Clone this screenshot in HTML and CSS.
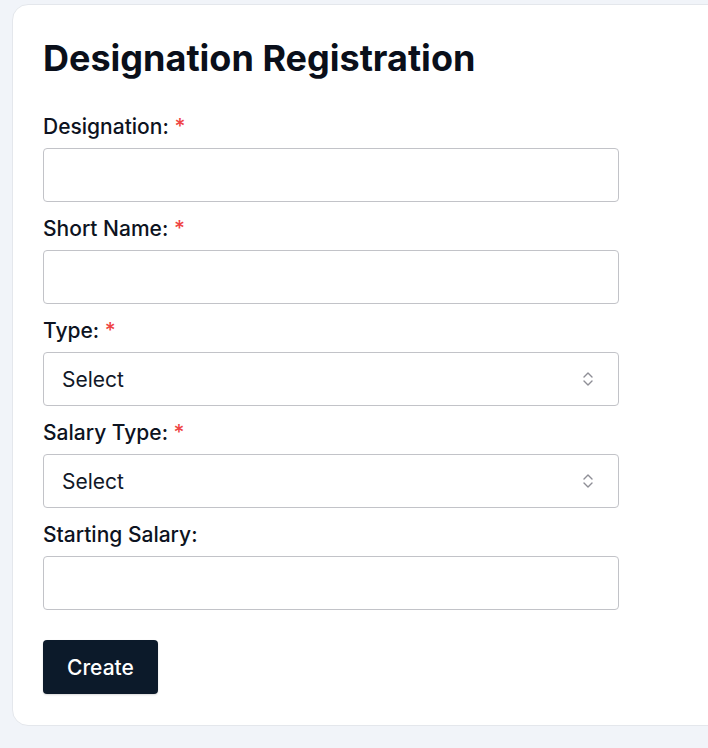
FILE: index.html
```html
<!DOCTYPE html>
<html lang="en">
<head>
<meta charset="utf-8">
<title>Designation Registration</title>
<link rel="stylesheet" href="styles.css">
</head>
<body>
<div class="card">
  <h1 class="title">Designation Registration</h1>
  <form class="form">
    <div class="field">
      <label class="label">Designation: <span class="req">*</span></label>
      <input class="input" type="text">
    </div>
    <div class="field">
      <label class="label">Short Name: <span class="req">*</span></label>
      <input class="input" type="text">
    </div>
    <div class="field">
      <label class="label">Type: <span class="req">*</span></label>
      <div class="select">
        <span class="select-text">Select</span>
        <svg class="chev" width="12" height="16" viewBox="0 0 12 16" fill="none" stroke="#8e8e96" stroke-width="1.4" stroke-linecap="round" stroke-linejoin="round"><path d="M2 6 L6 2 L10 6"/><path d="M2 10 L6 14 L10 10"/></svg>
      </div>
    </div>
    <div class="field">
      <label class="label">Salary Type: <span class="req">*</span></label>
      <div class="select">
        <span class="select-text">Select</span>
        <svg class="chev" width="12" height="16" viewBox="0 0 12 16" fill="none" stroke="#8e8e96" stroke-width="1.4" stroke-linecap="round" stroke-linejoin="round"><path d="M2 6 L6 2 L10 6"/><path d="M2 10 L6 14 L10 10"/></svg>
      </div>
    </div>
    <div class="field">
      <label class="label">Starting Salary:</label>
      <input class="input" type="text">
    </div>
    <div class="actions">
      <button class="btn" type="button">Create</button>
    </div>
  </form>
</div>
</body>
</html>
```

FILE: styles.css
```css
html, body {
  margin: 0;
  padding: 0;
}
body {
  background: #f1f4f9;
  font-family: Inter, "Liberation Sans", sans-serif;
  overflow: hidden;
  height: 748px;
  padding: 4px 0 0 12px;
  box-sizing: border-box;
}
.card {
  width: 760px;
  background: #ffffff;
  border: 1px solid #e4e7ec;
  border-radius: 16px;
  padding: 33px 30px 31px 30px;
  box-sizing: border-box;
}
.title {
  margin: 0;
  font-size: 36px;
  line-height: 40px;
  font-weight: 700;
  color: #0a0f1a;
}
.form {
  margin-top: 35px;
  display: flex;
  flex-direction: column;
  gap: 13px;
  width: 576px;
}
.field {
  display: flex;
  flex-direction: column;
  gap: 7px;
}
.label {
  font-size: 21px;
  line-height: 28px;
  font-weight: 500;
  color: #0d1321;
}
.req {
  color: #ef4444;
}
.input {
  height: 54px;
  box-sizing: border-box;
  border: 1px solid #c2c3c8;
  border-radius: 4px;
  background: #fff;
  font: inherit;
  font-size: 21px;
  padding: 0 18px;
  outline: none;
}
.select {
  height: 54px;
  box-sizing: border-box;
  border: 1px solid #c2c3c8;
  border-radius: 4px;
  background: #fff;
  display: flex;
  align-items: center;
  justify-content: space-between;
  padding: 0 24px 0 18px;
}
.select-text {
  font-size: 21px;
  color: #111827;
}
.chev {
  display: block;
}
.actions {
  margin-top: 17px;
}
.btn {
  height: 54px;
  padding: 0 24px;
  background: #0c1a2a;
  color: #ffffff;
  border: none;
  border-radius: 4px;
  font: inherit;
  font-size: 21px;
  font-weight: 500;
  box-shadow: 0 1px 2px rgba(0,0,0,0.15);
}
```
